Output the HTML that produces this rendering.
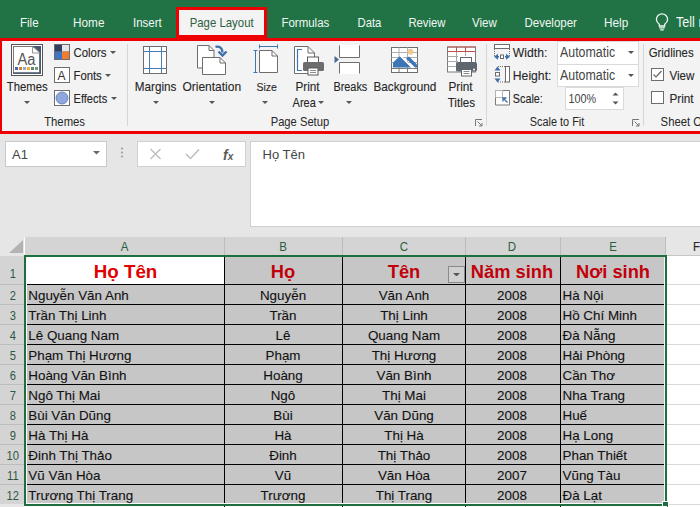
<!DOCTYPE html>
<html><head><meta charset="utf-8"><style>
html,body{margin:0;padding:0;width:700px;height:507px;overflow:hidden;background:#fff;font-family:"Liberation Sans", sans-serif;}
svg text{font-family:"Liberation Sans",sans-serif;}
.d{-webkit-text-stroke:0.1px currentColor;}
</style></head><body>
<div style="position:absolute;left:0px;top:0px;width:700px;height:38px;background:#217346"></div><div class="" style="position:absolute;left:20px;top:18.000px;font-size:11.5px;line-height:11.5px;color:#f2f7f4;font-weight:400;white-space:nowrap;transform:scaleY(1.12);transform-origin:0 9.000px;">File</div><div class="" style="position:absolute;left:73px;top:18.005px;font-size:11.8px;line-height:11.8px;color:#f2f7f4;font-weight:400;white-space:nowrap;transform:scaleY(1.12);transform-origin:0 8.995px;">Home</div><div class="" style="position:absolute;left:133px;top:18.000px;font-size:11.5px;line-height:11.5px;color:#f2f7f4;font-weight:400;white-space:nowrap;transform:scaleY(1.12);transform-origin:0 9.000px;">Insert</div><div class="" style="position:absolute;left:281.4px;top:18.000px;font-size:11.5px;line-height:11.5px;color:#f2f7f4;font-weight:400;white-space:nowrap;transform:scaleY(1.12);transform-origin:0 9.000px;">Formulas</div><div class="" style="position:absolute;left:357.5px;top:18.005px;font-size:11.3px;line-height:11.3px;color:#f2f7f4;font-weight:400;white-space:nowrap;transform:scaleY(1.12);transform-origin:0 8.995px;">Data</div><div class="" style="position:absolute;left:408.4px;top:18.005px;font-size:11.3px;line-height:11.3px;color:#f2f7f4;font-weight:400;white-space:nowrap;transform:scaleY(1.12);transform-origin:0 8.995px;">Review</div><div class="" style="position:absolute;left:472px;top:18.000px;font-size:11.5px;line-height:11.5px;color:#f2f7f4;font-weight:400;white-space:nowrap;transform:scaleY(1.12);transform-origin:0 9.000px;">View</div><div class="" style="position:absolute;left:524.5px;top:18.000px;font-size:11.5px;line-height:11.5px;color:#f2f7f4;font-weight:400;white-space:nowrap;transform:scaleY(1.12);transform-origin:0 9.000px;">Developer</div><div class="" style="position:absolute;left:604px;top:18.005px;font-size:11.8px;line-height:11.8px;color:#f2f7f4;font-weight:400;white-space:nowrap;transform:scaleY(1.12);transform-origin:0 8.995px;">Help</div><div class="" style="position:absolute;left:676px;top:17.010px;font-size:12.6px;line-height:12.6px;color:#f2f7f4;font-weight:400;white-space:nowrap;transform:scaleY(1.12);transform-origin:0 9.990px;">Tell me</div><svg style="position:absolute;left:655px;top:13px" width="14" height="18" viewBox="0 0 14 18"><path d="M4.3 11.3 C2.6 9.9 1.4 8.3 1.4 6.4 A5.6 5.6 0 0 1 12.6 6.4 C12.6 8.3 11.4 9.9 9.7 11.3 L9.7 13 L4.3 13 Z" fill="none" stroke="#f2f7f4" stroke-width="1.3"/><path d="M4.2 14.8 H9.8 M5.2 16.8 H8.8" stroke="#f2f7f4" stroke-width="1.2"/></svg><div style="position:absolute;left:0px;top:38px;width:700px;height:96px;background:#f3f3f3"></div><div style="position:absolute;left:179px;top:10px;width:85px;height:30px;background:#f3f3f3"></div><div class="" style="position:absolute;left:189.7px;top:18.002px;font-size:11.4px;line-height:11.4px;color:#2d5f42;font-weight:400;white-space:nowrap;transform:scaleY(1.12);transform-origin:0 8.998px;">Page Layout</div><div style="position:absolute;left:176px;top:7px;width:91px;height:3px;background:#ee0000"></div><div style="position:absolute;left:176px;top:7px;width:3px;height:34px;background:#ee0000"></div><div style="position:absolute;left:264px;top:7px;width:3px;height:34px;background:#ee0000"></div><div style="position:absolute;left:176px;top:35px;width:91px;height:3px;background:#ee0000"></div><div style="position:absolute;left:0px;top:38px;width:700px;height:3px;background:#ee0000"></div><div style="position:absolute;left:0px;top:131px;width:700px;height:3px;background:#ee0000"></div><div style="position:absolute;left:0px;top:38px;width:2px;height:96px;background:#ee0000"></div><div style="position:absolute;left:127px;top:44px;width:1px;height:82px;background:#d6d6d6"></div><div style="position:absolute;left:486px;top:44px;width:1px;height:82px;background:#d6d6d6"></div><div style="position:absolute;left:643px;top:44px;width:1px;height:82px;background:#d6d6d6"></div><div class="" style="position:absolute;left:44.2px;top:117.005px;font-size:11.3px;line-height:11.3px;color:#262626;font-weight:400;white-space:nowrap;transform:scaleY(1.12);transform-origin:0 8.995px;">Themes</div><div class="" style="position:absolute;left:270.7px;top:117.007px;font-size:11.2px;line-height:11.2px;color:#262626;font-weight:400;white-space:nowrap;transform:scaleY(1.12);transform-origin:0 8.993px;">Page Setup</div><div class="" style="position:absolute;left:529.8px;top:117.002px;font-size:10.9px;line-height:10.9px;color:#262626;font-weight:400;white-space:nowrap;transform:scaleY(1.12);transform-origin:0 8.998px;">Scale to Fit</div><div class="" style="position:absolute;left:660.6px;top:117.005px;font-size:11.3px;line-height:11.3px;color:#262626;font-weight:400;white-space:nowrap;transform:scaleY(1.12);transform-origin:0 8.995px;">Sheet Options</div><svg style="position:absolute;left:11px;top:44px" width="32" height="32" viewBox="0 0 32 32"><rect x="0.5" y="0.5" width="31" height="31" fill="#fff" stroke="#555"/>
<rect x="2.5" y="2.5" width="27" height="27" fill="#fff" stroke="#7a7a7a"/>
<path d="M29 2.5 V29 H2.5" fill="none" stroke="#44546a" stroke-width="1.6"/>
<path d="M21.5 2 L30 2 L30 9.5 Z" fill="#44546a"/>
<path d="M21.5 2.5 L21.5 9 L29 9 Z" fill="#fff" stroke="#7a7a7a" stroke-width="0.8"/>
<text x="6.4" y="20.6" font-family="Liberation Sans" font-size="16" fill="#555" textLength="18" lengthAdjust="spacingAndGlyphs">Aa</text>
<rect x="4" y="23" width="3" height="3" fill="#4a6ab0"/><rect x="8" y="23" width="3" height="3" fill="#d47f3a"/>
<rect x="12" y="23" width="3" height="3" fill="#9aaabb"/><rect x="16" y="23" width="3" height="3" fill="#f0b030"/>
<rect x="20" y="23" width="3" height="3" fill="#5a8a7a"/><rect x="24" y="23" width="3" height="3" fill="#7a9a6a"/></svg><div class="d" style="position:absolute;left:6.8px;top:82.005px;font-size:11.3px;line-height:11.3px;color:#262626;font-weight:400;white-space:nowrap;transform:scaleY(1.12);transform-origin:0 8.995px;">Themes</div><svg style="position:absolute;left:24.0px;top:101.2px" width="6" height="3.0" viewBox="0 0 6 3.0"><path d="M0 0 L6 0 L3.0 3.0 Z" fill="#555"/></svg><svg style="position:absolute;left:54px;top:44px" width="16" height="16" viewBox="0 0 16 16"><rect x="0" y="0" width="16" height="16" fill="#6d6d6d"/><rect x="1" y="1" width="7" height="6.5" fill="#2f3f5f"/><rect x="8" y="1" width="7" height="6.5" fill="#e3e6ec"/><rect x="1" y="7.5" width="7" height="7.5" fill="#3e74c0"/><rect x="8" y="7.5" width="7" height="7.5" fill="#ed7d31"/></svg><div class="d" style="position:absolute;left:73.5px;top:48.002px;font-size:11.4px;line-height:11.4px;color:#262626;font-weight:400;white-space:nowrap;transform:scaleY(1.12);transform-origin:0 8.998px;">Colors</div><svg style="position:absolute;left:110.0px;top:51.2px" width="6" height="3.0" viewBox="0 0 6 3.0"><path d="M0 0 L6 0 L3.0 3.0 Z" fill="#555"/></svg><svg style="position:absolute;left:54px;top:67px" width="16" height="16" viewBox="0 0 16 16"><rect x="0.5" y="0.5" width="15" height="15" fill="#fff" stroke="#6d6d6d"/><text x="3.5" y="13" font-family="Liberation Sans" font-size="12" fill="#333">A</text></svg><div class="d" style="position:absolute;left:73.5px;top:71.005px;font-size:11.3px;line-height:11.3px;color:#262626;font-weight:400;white-space:nowrap;transform:scaleY(1.12);transform-origin:0 8.995px;">Fonts</div><svg style="position:absolute;left:104.5px;top:74.0px" width="6" height="3.0" viewBox="0 0 6 3.0"><path d="M0 0 L6 0 L3.0 3.0 Z" fill="#555"/></svg><svg style="position:absolute;left:54px;top:90px" width="16" height="16" viewBox="0 0 16 16"><rect x="0.5" y="0.5" width="15" height="15" fill="#fff" stroke="#6d6d6d"/><circle cx="8" cy="8" r="6" fill="#8fa7dc" stroke="#5a75b5" stroke-width="0.8"/></svg><div class="d" style="position:absolute;left:73.5px;top:94.010px;font-size:11.1px;line-height:11.1px;color:#262626;font-weight:400;white-space:nowrap;transform:scaleY(1.12);transform-origin:0 8.990px;">Effects</div><svg style="position:absolute;left:110.5px;top:97.0px" width="6" height="3.0" viewBox="0 0 6 3.0"><path d="M0 0 L6 0 L3.0 3.0 Z" fill="#555"/></svg><svg style="position:absolute;left:143px;top:46px" width="25" height="28" viewBox="0 0 25 28"><rect x="0.5" y="0.5" width="23" height="27" fill="#fff" stroke="#6d6d6d"/><path d="M6.5 1 V27 M18.5 1 V27 M1 5.5 H23 M1 22.5 H23" stroke="#4a7ab5" stroke-width="1"/></svg><div class="d" style="position:absolute;left:134.8px;top:81.007px;font-size:11.7px;line-height:11.7px;color:#262626;font-weight:400;white-space:nowrap;transform:scaleY(1.12);transform-origin:0 9.993px;">Margins</div><svg style="position:absolute;left:152.5px;top:100.5px" width="6" height="3.0" viewBox="0 0 6 3.0"><path d="M0 0 L6 0 L3.0 3.0 Z" fill="#555"/></svg><svg style="position:absolute;left:196px;top:44px" width="32" height="32" viewBox="0 0 32 32"><path d="M1.5 1.5 H13 L18 6.5 V24 H1.5 Z" fill="#fff" stroke="#6d6d6d"/><path d="M13 1.5 V6.5 H18" fill="none" stroke="#6d6d6d"/>
<path d="M6.5 13.5 H24 L29.5 19 V30.5 H6.5 Z" fill="#fff" stroke="#6d6d6d"/><path d="M24 13.5 V19 H29.5" fill="none" stroke="#6d6d6d"/>
<path d="M19.5 2.8 C23.5 2 26.5 4 26.5 8.5" fill="none" stroke="#3e6fa8" stroke-width="2.4"/><path d="M22.5 7.5 L26.5 11.5 L30.5 7.5" fill="none" stroke="#3e6fa8" stroke-width="2.4"/></svg><div class="d" style="position:absolute;left:182.4px;top:81.000px;font-size:12.0px;line-height:12.0px;color:#262626;font-weight:400;white-space:nowrap;transform:scaleY(1.12);transform-origin:0 10.000px;">Orientation</div><svg style="position:absolute;left:209.4px;top:100.5px" width="6" height="3.0" viewBox="0 0 6 3.0"><path d="M0 0 L6 0 L3.0 3.0 Z" fill="#555"/></svg><svg style="position:absolute;left:253px;top:44px" width="27" height="31" viewBox="0 0 27 31"><path d="M6.5 6.5 H19 L24.5 12 V28.5 H6.5 Z" fill="#fff" stroke="#6d6d6d"/><path d="M19 6.5 V12 H24.5" fill="none" stroke="#6d6d6d"/>
<path d="M6.5 2.5 H24.5 M6.5 0.5 V4.5 M24.5 0.5 V4.5" stroke="#3e74b8" stroke-width="1"/>
<path d="M2.5 6.5 V28.5 M0.5 6.5 H4.5 M0.5 28.5 H4.5" stroke="#3e74b8" stroke-width="1"/></svg><div class="d" style="position:absolute;left:256.4px;top:82.000px;font-size:10.5px;line-height:10.5px;color:#262626;font-weight:400;white-space:nowrap;transform:scaleY(1.12);transform-origin:0 9.000px;">Size</div><svg style="position:absolute;left:262.4px;top:100.5px" width="6" height="3.0" viewBox="0 0 6 3.0"><path d="M0 0 L6 0 L3.0 3.0 Z" fill="#555"/></svg><svg style="position:absolute;left:293px;top:45px" width="33" height="32" viewBox="0 0 33 32"><path d="M1.5 1.5 H15 L21.5 8 V28.5 H1.5 Z" fill="#fff" stroke="#6d6d6d"/><path d="M15 1.5 V8 H21.5" fill="none" stroke="#6d6d6d"/>
<path d="M9 4.5 H4.5 V25.5 H9" fill="none" stroke="#3e74b8" stroke-width="1.2"/>
<rect x="14.5" y="12" width="11" height="6" fill="#fff" stroke="#5b5b5b"/>
<rect x="10" y="17" width="21" height="9" rx="1.5" fill="#6d6d6d"/>
<rect x="15" y="23" width="10" height="7" fill="#fff" stroke="#5b5b5b"/><path d="M17 25.5 H23 M17 27.5 H23" stroke="#8a8a8a"/></svg><div class="d" style="position:absolute;left:295.4px;top:82.005px;font-size:11.8px;line-height:11.8px;color:#262626;font-weight:400;white-space:nowrap;transform:scaleY(1.12);transform-origin:0 8.995px;">Print</div><div class="d" style="position:absolute;left:292.6px;top:98.000px;font-size:11.0px;line-height:11.0px;color:#262626;font-weight:400;white-space:nowrap;transform:scaleY(1.12);transform-origin:0 9.000px;">Area</div><svg style="position:absolute;left:318.4px;top:100.5px" width="6" height="3.0" viewBox="0 0 6 3.0"><path d="M0 0 L6 0 L3.0 3.0 Z" fill="#555"/></svg><svg style="position:absolute;left:333px;top:44px" width="28" height="32" viewBox="0 0 28 32"><rect x="6.5" y="1" width="20" height="12.5" fill="#fff"/><rect x="6.5" y="18" width="20" height="12" fill="#fff"/>
<path d="M6.5 1.5 V13.5 H26.5 V1.5" fill="none" stroke="#6d6d6d"/><path d="M6.5 29.5 V18.5 H26.5 V29.5" fill="none" stroke="#6d6d6d"/>
<path d="M1.5 12 L6 15.6 L1.5 19.2 Z" fill="#4a6a8f"/></svg><div class="d" style="position:absolute;left:333.4px;top:82.002px;font-size:10.9px;line-height:10.9px;color:#262626;font-weight:400;white-space:nowrap;transform:scaleY(1.12);transform-origin:0 8.998px;">Breaks</div><svg style="position:absolute;left:346.4px;top:100.5px" width="6" height="3.0" viewBox="0 0 6 3.0"><path d="M0 0 L6 0 L3.0 3.0 Z" fill="#555"/></svg><svg style="position:absolute;left:390px;top:46px" width="29" height="28" viewBox="0 0 29 28"><rect x="1.5" y="1.5" width="26" height="25" fill="#fff" stroke="#6d6d6d"/>
<path d="M1.5 6.5 H27.5 M1.5 11.5 H27.5 M1.5 16.5 H27.5 M9 1.5 V22.5 M17.5 1.5 V22.5" stroke="#b0b0b0"/>
<path d="M1.5 22.5 H27.5 M9 22.5 V26.5 M17.5 22.5 V26.5" stroke="#7a7a7a"/>
<circle cx="20.5" cy="5.8" r="3" fill="#f0c890"/>
<path d="M3 21.5 L3 16.5 L10 10 L21.5 21.5 Z" fill="#3e74b8"/>
<path d="M16 12.5 L19 10.5 L27 18.5 L27 21.5 L25 21.5 Z" fill="#3e74b8"/>
<path d="M10 9.5 L22.5 22" stroke="#fff" stroke-width="1.4"/></svg><div class="d" style="position:absolute;left:373.4px;top:82.005px;font-size:11.8px;line-height:11.8px;color:#262626;font-weight:400;white-space:nowrap;transform:scaleY(1.12);transform-origin:0 8.995px;">Background</div><svg style="position:absolute;left:446px;top:46px" width="32" height="31" viewBox="0 0 32 31"><rect x="1.5" y="1" width="28" height="25" fill="#fff" stroke="#7a7a7a"/>
<path d="M1.5 10.5 H12 M1.5 15.5 H12 M1.5 20.5 H12 M10.5 5.5 V26 M19.5 5.5 V10" stroke="#a8a8a8"/>
<path d="M1.5 1 H29.5 M1.5 5.5 H29.5 M10.5 1 V5.5 M19.5 1 V5.5" stroke="#c0504d"/>
<rect x="14.5" y="11.5" width="11" height="7" fill="#fff" stroke="#5f6670"/>
<rect x="10" y="16" width="21" height="9.5" rx="2" fill="#5f6670"/>
<circle cx="28" cy="23.5" r="1" fill="#fff"/>
<rect x="15.5" y="23.5" width="10" height="6.5" fill="#fff" stroke="#5f6670"/><path d="M17.5 25.5 H23.5 M17.5 27.5 H23.5" stroke="#8a8a8a"/></svg><div class="d" style="position:absolute;left:448.4px;top:82.005px;font-size:11.8px;line-height:11.8px;color:#262626;font-weight:400;white-space:nowrap;transform:scaleY(1.12);transform-origin:0 8.995px;">Print</div><div class="d" style="position:absolute;left:447.7px;top:97.010px;font-size:11.6px;line-height:11.6px;color:#262626;font-weight:400;white-space:nowrap;transform:scaleY(1.12);transform-origin:0 9.990px;">Titles</div><svg style="position:absolute;left:475px;top:119px" width="8" height="8" viewBox="0 0 8 8"><path d="M0.5 7 V0.5 H7" fill="none" stroke="#777"/><path d="M2.5 2.5 L7 7 M4 7 H7 V4" fill="none" stroke="#777"/></svg><svg style="position:absolute;left:632px;top:119px" width="8" height="8" viewBox="0 0 8 8"><path d="M0.5 7 V0.5 H7" fill="none" stroke="#777"/><path d="M2.5 2.5 L7 7 M4 7 H7 V4" fill="none" stroke="#777"/></svg><svg style="position:absolute;left:493px;top:43px" width="18" height="17" viewBox="0 0 18 17"><rect x="1.5" y="1.5" width="15" height="4" fill="#fff" stroke="#6d6d6d"/>
<path d="M1.5 6 V13 M16.5 6 V13" stroke="#6d6d6d" stroke-dasharray="1 1"/>
<path d="M1 13.8 L5 10.8 L5 16.8 Z M17 13.8 L13 10.8 L13 16.8 Z" fill="#3e6fa8"/>
<path d="M4 13.8 H6 M12 13.8 H14" stroke="#3e6fa8" stroke-width="1.5"/>
<rect x="7.5" y="12" width="3" height="3.5" fill="#fff" stroke="#6d6d6d"/></svg><div class="d" style="position:absolute;left:512.8px;top:47.007px;font-size:12.2px;line-height:12.2px;color:#262626;font-weight:400;white-space:nowrap;transform:scaleY(1.12);transform-origin:0 9.993px;">Width:</div><svg style="position:absolute;left:493px;top:66px" width="18" height="17" viewBox="0 0 18 17"><rect x="12.5" y="0.5" width="4" height="15.5" fill="#fff" stroke="#6d6d6d"/>
<path d="M5 0.5 H12 M5 16 H12" stroke="#6d6d6d" stroke-dasharray="1 1"/>
<path d="M4.5 0.5 L1.5 4.5 L7.5 4.5 Z M4.5 16.5 L1.5 12.5 L7.5 12.5 Z" fill="#3e6fa8"/>
<rect x="2.5" y="6.5" width="4" height="3.5" fill="#fff" stroke="#6d6d6d"/></svg><div class="d" style="position:absolute;left:512.8px;top:70.007px;font-size:12.2px;line-height:12.2px;color:#262626;font-weight:400;white-space:nowrap;transform:scaleY(1.12);transform-origin:0 9.993px;">Height:</div><svg style="position:absolute;left:494px;top:89px" width="16" height="17" viewBox="0 0 16 17"><path d="M9 1.5 H15.5 V16 H1.5 V9" fill="#fff" stroke="#7a7a7a"/>
<rect x="1.5" y="1.5" width="7" height="7" fill="#fff" stroke="#6d6d6d" stroke-dasharray="1 1"/>
<path d="M13.5 13.5 L9 9 M9 12.5 V9 H12.5" fill="none" stroke="#3e6fa8" stroke-width="1.3"/></svg><div class="d" style="position:absolute;left:512.8px;top:94.005px;font-size:10.8px;line-height:10.8px;color:#262626;font-weight:400;white-space:nowrap;transform:scaleY(1.12);transform-origin:0 8.995px;">Scale:</div><div style="position:absolute;left:557px;top:41px;width:82px;height:24px;background:#fff;border:1px solid #dadada;box-sizing:border-box"></div><div style="position:absolute;left:557px;top:64px;width:82px;height:23px;background:#fff;border:1px solid #dadada;box-sizing:border-box"></div><div class="" style="position:absolute;left:560px;top:47.002px;font-size:12.4px;line-height:12.4px;color:#444;font-weight:400;white-space:nowrap;transform:scaleY(1.12);transform-origin:0 9.998px;">Automatic</div><div class="" style="position:absolute;left:560px;top:70.002px;font-size:12.4px;line-height:12.4px;color:#444;font-weight:400;white-space:nowrap;transform:scaleY(1.12);transform-origin:0 9.998px;">Automatic</div><svg style="position:absolute;left:628.0px;top:50.5px" width="6" height="3.0" viewBox="0 0 6 3.0"><path d="M0 0 L6 0 L3.0 3.0 Z" fill="#555"/></svg><svg style="position:absolute;left:628.0px;top:73.5px" width="6" height="3.0" viewBox="0 0 6 3.0"><path d="M0 0 L6 0 L3.0 3.0 Z" fill="#555"/></svg><div style="position:absolute;left:565px;top:87px;width:59px;height:23px;background:#fff;border:1px solid #dadada;box-sizing:border-box"></div><div class="" style="position:absolute;left:568.6px;top:94.005px;font-size:10.8px;line-height:10.8px;color:#444;font-weight:400;white-space:nowrap;transform:scaleY(1.12);transform-origin:0 8.995px;">100%</div><svg style="position:absolute;left:611px;top:91px" width="9" height="15" viewBox="0 0 9 15"><path d="M1.5 4.5 L4.5 1.5 L7.5 4.5 Z" fill="#555"/><path d="M1.5 10.5 L4.5 13.5 L7.5 10.5 Z" fill="#555"/></svg><div class="d" style="position:absolute;left:648.7px;top:48.002px;font-size:11.4px;line-height:11.4px;color:#262626;font-weight:400;white-space:nowrap;transform:scaleY(1.12);transform-origin:0 8.998px;">Gridlines</div><svg style="position:absolute;left:651px;top:68px" width="13" height="13" viewBox="0 0 13 13"><rect x="0.5" y="0.5" width="12" height="12" fill="#fff" stroke="#6d6d6d"/><path d="M2.5 6.5 L5 9 L10.5 3" fill="none" stroke="#666" stroke-width="1.2"/></svg><div class="d" style="position:absolute;left:669.4px;top:70.010px;font-size:11.6px;line-height:11.6px;color:#262626;font-weight:400;white-space:nowrap;transform:scaleY(1.12);transform-origin:0 9.990px;">View</div><svg style="position:absolute;left:651px;top:91px" width="13" height="13" viewBox="0 0 13 13"><rect x="0.5" y="0.5" width="12" height="12" fill="#fff" stroke="#6d6d6d"/></svg><div class="d" style="position:absolute;left:669.4px;top:94.005px;font-size:11.8px;line-height:11.8px;color:#262626;font-weight:400;white-space:nowrap;transform:scaleY(1.12);transform-origin:0 8.995px;">Print</div><div style="position:absolute;left:0px;top:134px;width:700px;height:103px;background:#e6e6e6"></div><div style="position:absolute;left:5px;top:141px;width:102px;height:26px;background:#fff;border:1px solid #c8c8c8;box-sizing:border-box"></div><div class="" style="position:absolute;left:12px;top:148.000px;font-size:13px;line-height:13px;color:#444;font-weight:400;white-space:nowrap;">A1</div><svg style="position:absolute;left:93.0px;top:151.45px" width="7" height="3.5" viewBox="0 0 7 3.5"><path d="M0 0 L7 0 L3.5 3.5 Z" fill="#666"/></svg><svg style="position:absolute;left:120px;top:147px" width="4" height="12" viewBox="0 0 4 12"><circle cx="2" cy="1.5" r="1" fill="#999"/><circle cx="2" cy="5.5" r="1" fill="#999"/><circle cx="2" cy="9.5" r="1" fill="#999"/></svg><div style="position:absolute;left:137px;top:141px;width:109px;height:26px;background:#fff;border:1px solid #d0d0d0;box-sizing:border-box"></div><svg style="position:absolute;left:149px;top:148px" width="13" height="12" viewBox="0 0 13 12"><path d="M1.5 1 L11.5 11 M11.5 1 L1.5 11" stroke="#bdbdbd" stroke-width="1.3"/></svg><svg style="position:absolute;left:185px;top:148px" width="15" height="12" viewBox="0 0 15 12"><path d="M1 6 L5.5 10.5 L14 1.5" fill="none" stroke="#bdbdbd" stroke-width="1.5"/></svg><div class="" style="position:absolute;left:223px;top:147.500px;font-size:14px;line-height:14px;color:#5a5a5a;font-weight:700;white-space:nowrap;font-family:"Liberation Serif",serif;"><i>f</i><span style='font-size:10px'><i>x</i></span></div><div style="position:absolute;left:250px;top:141px;width:450px;height:86px;background:#fff;border:1px solid #d0d0d0;border-right:none;box-sizing:border-box"></div><div class="" style="position:absolute;left:262.5px;top:148.000px;font-size:13px;line-height:13px;color:#444;font-weight:400;white-space:nowrap;">Họ Tên</div><div style="position:absolute;left:25px;top:237px;width:641px;height:19px;background:#d4d4d4"></div><div style="position:absolute;left:666px;top:237px;width:34px;height:19px;background:#e6e6e6;border-bottom:1px solid #c6c6c6;box-sizing:border-box"></div><div style="position:absolute;left:224px;top:237px;width:1px;height:18px;background:#bdbdbd"></div><div style="position:absolute;left:342px;top:237px;width:1px;height:18px;background:#bdbdbd"></div><div style="position:absolute;left:465px;top:237px;width:1px;height:18px;background:#bdbdbd"></div><div style="position:absolute;left:560px;top:237px;width:1px;height:18px;background:#bdbdbd"></div><div style="position:absolute;left:665px;top:237px;width:1px;height:18px;background:#bdbdbd"></div><div class="" style="position:absolute;left:24.5px;top:242.000px;width:200px;text-align:center;font-size:11.5px;line-height:11.5px;color:#2a5e3e;font-weight:400;white-space:nowrap;transform:scaleY(1.12);transform-origin:0 9.000px;">A</div><div class="" style="position:absolute;left:183px;top:242.000px;width:200px;text-align:center;font-size:11.5px;line-height:11.5px;color:#2a5e3e;font-weight:400;white-space:nowrap;transform:scaleY(1.12);transform-origin:0 9.000px;">B</div><div class="" style="position:absolute;left:304px;top:242.000px;width:200px;text-align:center;font-size:11.5px;line-height:11.5px;color:#2a5e3e;font-weight:400;white-space:nowrap;transform:scaleY(1.12);transform-origin:0 9.000px;">C</div><div class="" style="position:absolute;left:412px;top:242.000px;width:200px;text-align:center;font-size:11.5px;line-height:11.5px;color:#2a5e3e;font-weight:400;white-space:nowrap;transform:scaleY(1.12);transform-origin:0 9.000px;">D</div><div class="" style="position:absolute;left:513px;top:242.000px;width:200px;text-align:center;font-size:11.5px;line-height:11.5px;color:#2a5e3e;font-weight:400;white-space:nowrap;transform:scaleY(1.12);transform-origin:0 9.000px;">E</div><div class="d" style="position:absolute;left:693px;top:242.000px;font-size:11.5px;line-height:11.5px;color:#262626;font-weight:400;white-space:nowrap;transform:scaleY(1.12);transform-origin:0 9.000px;">F</div><div style="position:absolute;left:0px;top:237px;width:25px;height:19px;background:#e6e6e6"></div><svg style="position:absolute;left:7px;top:239px" width="17" height="15" viewBox="0 0 17 15"><path d="M16 1 L16 14 L2 14 Z" fill="#b3b3b3"/></svg><div style="position:absolute;left:24px;top:237px;width:1px;height:19px;background:#fdfdfd"></div><div style="position:absolute;left:0px;top:256px;width:24px;height:251px;background:#d4d4d4"></div><div style="position:absolute;left:0px;top:284px;width:24px;height:1px;background:#bdbdbd"></div><div style="position:absolute;left:0px;top:304px;width:24px;height:1px;background:#bdbdbd"></div><div style="position:absolute;left:0px;top:324px;width:24px;height:1px;background:#bdbdbd"></div><div style="position:absolute;left:0px;top:344px;width:24px;height:1px;background:#bdbdbd"></div><div style="position:absolute;left:0px;top:364px;width:24px;height:1px;background:#bdbdbd"></div><div style="position:absolute;left:0px;top:384px;width:24px;height:1px;background:#bdbdbd"></div><div style="position:absolute;left:0px;top:404px;width:24px;height:1px;background:#bdbdbd"></div><div style="position:absolute;left:0px;top:424px;width:24px;height:1px;background:#bdbdbd"></div><div style="position:absolute;left:0px;top:444px;width:24px;height:1px;background:#bdbdbd"></div><div style="position:absolute;left:0px;top:464px;width:24px;height:1px;background:#bdbdbd"></div><div style="position:absolute;left:0px;top:484px;width:24px;height:1px;background:#bdbdbd"></div><div style="position:absolute;left:0px;top:504px;width:24px;height:3px;background:#e6e6e6"></div><div class="" style="position:absolute;left:-87.2px;top:268.991px;width:200px;text-align:center;font-size:11.2px;line-height:11.2px;color:#30563f;font-weight:400;white-space:nowrap;transform:scaleY(1.12);transform-origin:0 9.009px;">1</div><div class="" style="position:absolute;left:-87.2px;top:290.991px;width:200px;text-align:center;font-size:11.2px;line-height:11.2px;color:#30563f;font-weight:400;white-space:nowrap;transform:scaleY(1.12);transform-origin:0 9.009px;">2</div><div class="" style="position:absolute;left:-87.2px;top:310.991px;width:200px;text-align:center;font-size:11.2px;line-height:11.2px;color:#30563f;font-weight:400;white-space:nowrap;transform:scaleY(1.12);transform-origin:0 9.009px;">3</div><div class="" style="position:absolute;left:-87.2px;top:330.991px;width:200px;text-align:center;font-size:11.2px;line-height:11.2px;color:#30563f;font-weight:400;white-space:nowrap;transform:scaleY(1.12);transform-origin:0 9.009px;">4</div><div class="" style="position:absolute;left:-87.2px;top:350.991px;width:200px;text-align:center;font-size:11.2px;line-height:11.2px;color:#30563f;font-weight:400;white-space:nowrap;transform:scaleY(1.12);transform-origin:0 9.009px;">5</div><div class="" style="position:absolute;left:-87.2px;top:370.991px;width:200px;text-align:center;font-size:11.2px;line-height:11.2px;color:#30563f;font-weight:400;white-space:nowrap;transform:scaleY(1.12);transform-origin:0 9.009px;">6</div><div class="" style="position:absolute;left:-87.2px;top:390.991px;width:200px;text-align:center;font-size:11.2px;line-height:11.2px;color:#30563f;font-weight:400;white-space:nowrap;transform:scaleY(1.12);transform-origin:0 9.009px;">7</div><div class="" style="position:absolute;left:-87.2px;top:410.991px;width:200px;text-align:center;font-size:11.2px;line-height:11.2px;color:#30563f;font-weight:400;white-space:nowrap;transform:scaleY(1.12);transform-origin:0 9.009px;">8</div><div class="" style="position:absolute;left:-87.2px;top:430.991px;width:200px;text-align:center;font-size:11.2px;line-height:11.2px;color:#30563f;font-weight:400;white-space:nowrap;transform:scaleY(1.12);transform-origin:0 9.009px;">9</div><div class="" style="position:absolute;left:-87.2px;top:450.991px;width:200px;text-align:center;font-size:11.2px;line-height:11.2px;color:#30563f;font-weight:400;white-space:nowrap;transform:scaleY(1.12);transform-origin:0 9.009px;">10</div><div class="" style="position:absolute;left:-87.2px;top:470.991px;width:200px;text-align:center;font-size:11.2px;line-height:11.2px;color:#30563f;font-weight:400;white-space:nowrap;transform:scaleY(1.12);transform-origin:0 9.009px;">11</div><div class="" style="position:absolute;left:-87.2px;top:490.991px;width:200px;text-align:center;font-size:11.2px;line-height:11.2px;color:#30563f;font-weight:400;white-space:nowrap;transform:scaleY(1.12);transform-origin:0 9.009px;">12</div><div style="position:absolute;left:26px;top:257px;width:639px;height:247px;background:#c6c6c6"></div><div style="position:absolute;left:26px;top:257px;width:198px;height:27px;background:#fff"></div><div style="position:absolute;left:667px;top:257px;width:33px;height:250px;background:#fff"></div><div style="position:absolute;left:667px;top:284px;width:33px;height:1px;background:#dadada"></div><div style="position:absolute;left:667px;top:304px;width:33px;height:1px;background:#dadada"></div><div style="position:absolute;left:667px;top:324px;width:33px;height:1px;background:#dadada"></div><div style="position:absolute;left:667px;top:344px;width:33px;height:1px;background:#dadada"></div><div style="position:absolute;left:667px;top:364px;width:33px;height:1px;background:#dadada"></div><div style="position:absolute;left:667px;top:384px;width:33px;height:1px;background:#dadada"></div><div style="position:absolute;left:667px;top:404px;width:33px;height:1px;background:#dadada"></div><div style="position:absolute;left:667px;top:424px;width:33px;height:1px;background:#dadada"></div><div style="position:absolute;left:667px;top:444px;width:33px;height:1px;background:#dadada"></div><div style="position:absolute;left:667px;top:464px;width:33px;height:1px;background:#dadada"></div><div style="position:absolute;left:667px;top:484px;width:33px;height:1px;background:#dadada"></div><div style="position:absolute;left:667px;top:504px;width:33px;height:1px;background:#dadada"></div><div style="position:absolute;left:224px;top:257px;width:1px;height:247px;background:#000"></div><div style="position:absolute;left:342px;top:257px;width:1px;height:247px;background:#000"></div><div style="position:absolute;left:465px;top:257px;width:1px;height:247px;background:#000"></div><div style="position:absolute;left:560px;top:257px;width:1px;height:247px;background:#000"></div><div style="position:absolute;left:27px;top:284px;width:637px;height:1px;background:#000"></div><div style="position:absolute;left:27px;top:304px;width:637px;height:1px;background:#000"></div><div style="position:absolute;left:27px;top:324px;width:637px;height:1px;background:#000"></div><div style="position:absolute;left:27px;top:344px;width:637px;height:1px;background:#000"></div><div style="position:absolute;left:27px;top:364px;width:637px;height:1px;background:#000"></div><div style="position:absolute;left:27px;top:384px;width:637px;height:1px;background:#000"></div><div style="position:absolute;left:27px;top:404px;width:637px;height:1px;background:#000"></div><div style="position:absolute;left:27px;top:424px;width:637px;height:1px;background:#000"></div><div style="position:absolute;left:27px;top:444px;width:637px;height:1px;background:#000"></div><div style="position:absolute;left:27px;top:464px;width:637px;height:1px;background:#000"></div><div style="position:absolute;left:27px;top:484px;width:637px;height:1px;background:#000"></div><div style="position:absolute;left:26px;top:257px;width:1px;height:247px;background:#fafafa"></div><div style="position:absolute;left:664px;top:257px;width:1px;height:247px;background:#fafafa"></div><div style="position:absolute;left:26px;top:503px;width:639px;height:1px;background:#fafafa"></div><div style="position:absolute;left:24px;top:255px;width:643px;height:2px;background:#1f6e40"></div><div style="position:absolute;left:24px;top:255px;width:2px;height:251px;background:#1f6e40"></div><div style="position:absolute;left:24px;top:504px;width:638px;height:2px;background:#1f6e40"></div><div style="position:absolute;left:665px;top:255px;width:2px;height:246px;background:#1f6e40"></div><div style="position:absolute;left:662px;top:501px;width:7px;height:7px;background:#fff"></div><div style="position:absolute;left:663px;top:502px;width:5px;height:5px;background:#1f6e40"></div><div style="position:absolute;left:26px;top:506px;width:641px;height:1px;background:#fdfdfd"></div><div style="position:absolute;left:224px;top:506px;width:1px;height:1px;background:#000"></div><div style="position:absolute;left:342px;top:506px;width:1px;height:1px;background:#000"></div><div style="position:absolute;left:465px;top:506px;width:1px;height:1px;background:#000"></div><div style="position:absolute;left:560px;top:506px;width:1px;height:1px;background:#000"></div><div class="" style="position:absolute;left:25.5px;top:263.006px;width:200px;text-align:center;font-size:18.8px;line-height:18.8px;color:#e00000;font-weight:700;white-space:nowrap;">Họ Tên</div><div class="" style="position:absolute;left:183px;top:263.006px;width:200px;text-align:center;font-size:18.3px;line-height:18.3px;color:#c2000c;font-weight:700;white-space:nowrap;">Họ</div><div class="" style="position:absolute;left:304px;top:263.006px;width:200px;text-align:center;font-size:18.3px;line-height:18.3px;color:#c2000c;font-weight:700;white-space:nowrap;">Tên</div><div class="" style="position:absolute;left:412px;top:263.006px;width:200px;text-align:center;font-size:18.3px;line-height:18.3px;color:#c2000c;font-weight:700;white-space:nowrap;">Năm sinh</div><div class="" style="position:absolute;left:513px;top:263.006px;width:200px;text-align:center;font-size:18.3px;line-height:18.3px;color:#c2000c;font-weight:700;white-space:nowrap;">Nơi sinh</div><div style="position:absolute;left:448px;top:266px;width:17px;height:17px;background:#d0d0d0;border:1px solid #8a8a8a;box-sizing:border-box"></div><svg style="position:absolute;left:453.0px;top:272.75px" width="7" height="3.5" viewBox="0 0 7 3.5"><path d="M0 0 L7 0 L3.5 3.5 Z" fill="#555"/></svg><div class="d" style="position:absolute;left:28.3px;top:289.003px;font-size:13.4px;line-height:13.4px;color:#111;font-weight:400;white-space:nowrap;">Nguyễn Văn Anh</div><div class="d" style="position:absolute;left:183px;top:289.003px;width:200px;text-align:center;font-size:13.4px;line-height:13.4px;color:#111;font-weight:400;white-space:nowrap;">Nguyễn</div><div class="d" style="position:absolute;left:304px;top:289.003px;width:200px;text-align:center;font-size:13.4px;line-height:13.4px;color:#111;font-weight:400;white-space:nowrap;">Văn Anh</div><div class="d" style="position:absolute;left:412px;top:289.003px;width:200px;text-align:center;font-size:13.4px;line-height:13.4px;color:#111;font-weight:400;white-space:nowrap;">2008</div><div class="d" style="position:absolute;left:562.5px;top:289.003px;font-size:13.4px;line-height:13.4px;color:#111;font-weight:400;white-space:nowrap;">Hà Nội</div><div class="d" style="position:absolute;left:28.3px;top:309.003px;font-size:13.4px;line-height:13.4px;color:#111;font-weight:400;white-space:nowrap;">Trần Thị Linh</div><div class="d" style="position:absolute;left:183px;top:309.003px;width:200px;text-align:center;font-size:13.4px;line-height:13.4px;color:#111;font-weight:400;white-space:nowrap;">Trần</div><div class="d" style="position:absolute;left:304px;top:309.003px;width:200px;text-align:center;font-size:13.4px;line-height:13.4px;color:#111;font-weight:400;white-space:nowrap;">Thị Linh</div><div class="d" style="position:absolute;left:412px;top:309.003px;width:200px;text-align:center;font-size:13.4px;line-height:13.4px;color:#111;font-weight:400;white-space:nowrap;">2008</div><div class="d" style="position:absolute;left:562.5px;top:309.003px;font-size:13.4px;line-height:13.4px;color:#111;font-weight:400;white-space:nowrap;">Hồ Chí Minh</div><div class="d" style="position:absolute;left:28.3px;top:329.003px;font-size:13.4px;line-height:13.4px;color:#111;font-weight:400;white-space:nowrap;">Lê Quang Nam</div><div class="d" style="position:absolute;left:183px;top:329.003px;width:200px;text-align:center;font-size:13.4px;line-height:13.4px;color:#111;font-weight:400;white-space:nowrap;">Lê</div><div class="d" style="position:absolute;left:304px;top:329.003px;width:200px;text-align:center;font-size:13.4px;line-height:13.4px;color:#111;font-weight:400;white-space:nowrap;">Quang Nam</div><div class="d" style="position:absolute;left:412px;top:329.003px;width:200px;text-align:center;font-size:13.4px;line-height:13.4px;color:#111;font-weight:400;white-space:nowrap;">2008</div><div class="d" style="position:absolute;left:562.5px;top:329.003px;font-size:13.4px;line-height:13.4px;color:#111;font-weight:400;white-space:nowrap;">Đà Nẵng</div><div class="d" style="position:absolute;left:28.3px;top:349.003px;font-size:13.4px;line-height:13.4px;color:#111;font-weight:400;white-space:nowrap;">Phạm Thị Hương</div><div class="d" style="position:absolute;left:183px;top:349.003px;width:200px;text-align:center;font-size:13.4px;line-height:13.4px;color:#111;font-weight:400;white-space:nowrap;">Phạm</div><div class="d" style="position:absolute;left:304px;top:349.003px;width:200px;text-align:center;font-size:13.4px;line-height:13.4px;color:#111;font-weight:400;white-space:nowrap;">Thị Hương</div><div class="d" style="position:absolute;left:412px;top:349.003px;width:200px;text-align:center;font-size:13.4px;line-height:13.4px;color:#111;font-weight:400;white-space:nowrap;">2008</div><div class="d" style="position:absolute;left:562.5px;top:349.003px;font-size:13.4px;line-height:13.4px;color:#111;font-weight:400;white-space:nowrap;">Hải Phòng</div><div class="d" style="position:absolute;left:28.3px;top:369.003px;font-size:13.4px;line-height:13.4px;color:#111;font-weight:400;white-space:nowrap;">Hoàng Văn Bình</div><div class="d" style="position:absolute;left:183px;top:369.003px;width:200px;text-align:center;font-size:13.4px;line-height:13.4px;color:#111;font-weight:400;white-space:nowrap;">Hoàng</div><div class="d" style="position:absolute;left:304px;top:369.003px;width:200px;text-align:center;font-size:13.4px;line-height:13.4px;color:#111;font-weight:400;white-space:nowrap;">Văn Bình</div><div class="d" style="position:absolute;left:412px;top:369.003px;width:200px;text-align:center;font-size:13.4px;line-height:13.4px;color:#111;font-weight:400;white-space:nowrap;">2008</div><div class="d" style="position:absolute;left:562.5px;top:369.003px;font-size:13.4px;line-height:13.4px;color:#111;font-weight:400;white-space:nowrap;">Cần Thơ</div><div class="d" style="position:absolute;left:28.3px;top:389.003px;font-size:13.4px;line-height:13.4px;color:#111;font-weight:400;white-space:nowrap;">Ngô Thị Mai</div><div class="d" style="position:absolute;left:183px;top:389.003px;width:200px;text-align:center;font-size:13.4px;line-height:13.4px;color:#111;font-weight:400;white-space:nowrap;">Ngô</div><div class="d" style="position:absolute;left:304px;top:389.003px;width:200px;text-align:center;font-size:13.4px;line-height:13.4px;color:#111;font-weight:400;white-space:nowrap;">Thị Mai</div><div class="d" style="position:absolute;left:412px;top:389.003px;width:200px;text-align:center;font-size:13.4px;line-height:13.4px;color:#111;font-weight:400;white-space:nowrap;">2008</div><div class="d" style="position:absolute;left:562.5px;top:389.003px;font-size:13.4px;line-height:13.4px;color:#111;font-weight:400;white-space:nowrap;">Nha Trang</div><div class="d" style="position:absolute;left:28.3px;top:409.003px;font-size:13.4px;line-height:13.4px;color:#111;font-weight:400;white-space:nowrap;">Bùi Văn Dũng</div><div class="d" style="position:absolute;left:183px;top:409.003px;width:200px;text-align:center;font-size:13.4px;line-height:13.4px;color:#111;font-weight:400;white-space:nowrap;">Bùi</div><div class="d" style="position:absolute;left:304px;top:409.003px;width:200px;text-align:center;font-size:13.4px;line-height:13.4px;color:#111;font-weight:400;white-space:nowrap;">Văn Dũng</div><div class="d" style="position:absolute;left:412px;top:409.003px;width:200px;text-align:center;font-size:13.4px;line-height:13.4px;color:#111;font-weight:400;white-space:nowrap;">2008</div><div class="d" style="position:absolute;left:562.5px;top:409.003px;font-size:13.4px;line-height:13.4px;color:#111;font-weight:400;white-space:nowrap;">Huế</div><div class="d" style="position:absolute;left:28.3px;top:429.003px;font-size:13.4px;line-height:13.4px;color:#111;font-weight:400;white-space:nowrap;">Hà Thị Hà</div><div class="d" style="position:absolute;left:183px;top:429.003px;width:200px;text-align:center;font-size:13.4px;line-height:13.4px;color:#111;font-weight:400;white-space:nowrap;">Hà</div><div class="d" style="position:absolute;left:304px;top:429.003px;width:200px;text-align:center;font-size:13.4px;line-height:13.4px;color:#111;font-weight:400;white-space:nowrap;">Thị Hà</div><div class="d" style="position:absolute;left:412px;top:429.003px;width:200px;text-align:center;font-size:13.4px;line-height:13.4px;color:#111;font-weight:400;white-space:nowrap;">2008</div><div class="d" style="position:absolute;left:562.5px;top:429.003px;font-size:13.4px;line-height:13.4px;color:#111;font-weight:400;white-space:nowrap;">Hạ Long</div><div class="d" style="position:absolute;left:28.3px;top:449.003px;font-size:13.4px;line-height:13.4px;color:#111;font-weight:400;white-space:nowrap;">Đinh Thị Thảo</div><div class="d" style="position:absolute;left:183px;top:449.003px;width:200px;text-align:center;font-size:13.4px;line-height:13.4px;color:#111;font-weight:400;white-space:nowrap;">Đinh</div><div class="d" style="position:absolute;left:304px;top:449.003px;width:200px;text-align:center;font-size:13.4px;line-height:13.4px;color:#111;font-weight:400;white-space:nowrap;">Thị Thảo</div><div class="d" style="position:absolute;left:412px;top:449.003px;width:200px;text-align:center;font-size:13.4px;line-height:13.4px;color:#111;font-weight:400;white-space:nowrap;">2008</div><div class="d" style="position:absolute;left:562.5px;top:449.003px;font-size:13.4px;line-height:13.4px;color:#111;font-weight:400;white-space:nowrap;">Phan Thiết</div><div class="d" style="position:absolute;left:28.3px;top:469.003px;font-size:13.4px;line-height:13.4px;color:#111;font-weight:400;white-space:nowrap;">Vũ Văn Hòa</div><div class="d" style="position:absolute;left:183px;top:469.003px;width:200px;text-align:center;font-size:13.4px;line-height:13.4px;color:#111;font-weight:400;white-space:nowrap;">Vũ</div><div class="d" style="position:absolute;left:304px;top:469.003px;width:200px;text-align:center;font-size:13.4px;line-height:13.4px;color:#111;font-weight:400;white-space:nowrap;">Văn Hòa</div><div class="d" style="position:absolute;left:412px;top:469.003px;width:200px;text-align:center;font-size:13.4px;line-height:13.4px;color:#111;font-weight:400;white-space:nowrap;">2007</div><div class="d" style="position:absolute;left:562.5px;top:469.003px;font-size:13.4px;line-height:13.4px;color:#111;font-weight:400;white-space:nowrap;">Vũng Tàu</div><div class="d" style="position:absolute;left:28.3px;top:489.003px;font-size:13.4px;line-height:13.4px;color:#111;font-weight:400;white-space:nowrap;">Trương Thị Trang</div><div class="d" style="position:absolute;left:183px;top:489.003px;width:200px;text-align:center;font-size:13.4px;line-height:13.4px;color:#111;font-weight:400;white-space:nowrap;">Trương</div><div class="d" style="position:absolute;left:304px;top:489.003px;width:200px;text-align:center;font-size:13.4px;line-height:13.4px;color:#111;font-weight:400;white-space:nowrap;">Thị Trang</div><div class="d" style="position:absolute;left:412px;top:489.003px;width:200px;text-align:center;font-size:13.4px;line-height:13.4px;color:#111;font-weight:400;white-space:nowrap;">2008</div><div class="d" style="position:absolute;left:562.5px;top:489.003px;font-size:13.4px;line-height:13.4px;color:#111;font-weight:400;white-space:nowrap;">Đà Lạt</div>
</body></html>
